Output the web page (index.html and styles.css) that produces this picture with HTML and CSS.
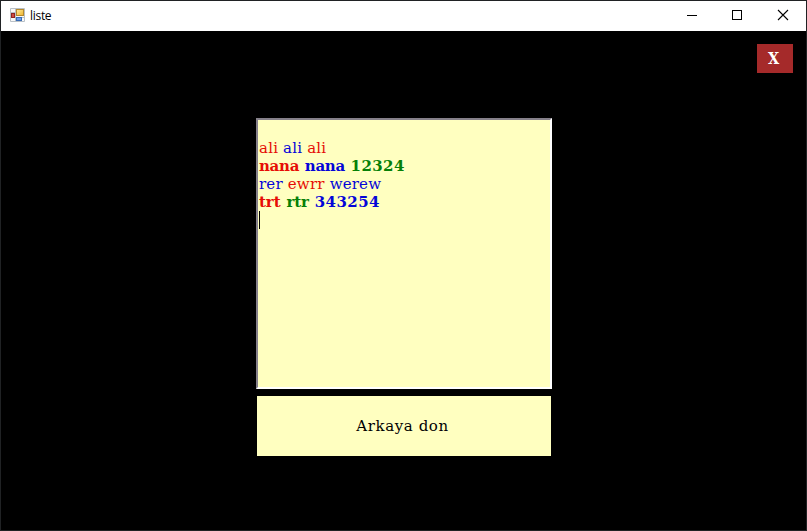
FILE: index.html
```html
<!DOCTYPE html>
<html lang="tr">
<head>
<meta charset="utf-8">
<title>liste</title>
<link rel="stylesheet" href="styles.css">
</head>
<body>
<div class="window">
  <header class="titlebar">
    <svg class="app-icon" width="15" height="15" viewBox="0 0 15 15">
      <defs>
        <linearGradient id="gold" x2="1" y2="1"><stop stop-color="#ffeb9b"/><stop offset="1" stop-color="#eeb32c"/></linearGradient>
      </defs>
      <path d="M.5.5h14v13H.5zM5.5.5v13M.5 4.500h5M.5 9.500h14M9.500 9.500v4" fill="#f8f8f8" stroke="#b9c0c6"/>
      <rect x="6.500" y="1.500" width="7" height="6" fill="url(#gold)" stroke="#b78a2c"/>
      <rect x="1.500" y="5.500" width="3" height="4" fill="#cf4a43" stroke="#8f2522"/>
      <rect x="6.500" y="9.500" width="5" height="3" fill="#6f9ee6" stroke="#386bb4"/>
    </svg>
    <h1 class="title">liste</h1>
    <nav class="controls">
      <svg class="control" viewBox="0 0 46 30"><path d="M19 15.500h10"/></svg>
      <svg class="control" viewBox="0 0 46 30"><path d="M18.500 10.500h9v9h-9z"/></svg>
      <svg class="control cross" viewBox="0 0 46 30"><path d="M18 10l10 10M28 10l-10 10"/></svg>
    </nav>
  </header>
  <main class="form">
    <div class="toolbar"><button class="exit">X</button></div>
    <div class="list">
      <p class="line"></p>
      <p class="line"><span class="red">ali</span> <span class="blue">ali</span> <span class="red">ali</span></p>
      <p class="line bold"><span class="red">nana</span> <span class="blue">nana</span> <span class="green num">12324</span></p>
      <p class="line"><span class="blue">rer</span> <span class="red">ewrr</span> <span class="blue">werew</span></p>
      <p class="line bold spaced"><span class="red">trt</span> <span class="green">rtr</span> <span class="blue num">343254</span></p>
      <p class="line"><span class="caret"></span></p>
    </div>
    <button class="back">Arkaya don</button>
  </main>
</div>
</body>
</html>
```
FILE: styles.css
```css
* { box-sizing: border-box; }
body { margin: 0; background: #191919; }
.window {
  width: 807px; height: 531px;
  border: 1px solid #202224;
  display: flex; flex-direction: column;
  background: #000;
}
.titlebar {
  height: 30px; flex: none;
  display: flex; align-items: center;
  padding-left: 9px;
  background: #fff;
}
.app-icon { margin-top: -1px; }
.title {
  margin: 0 0 0 5px;
  font: 12px/30px "Open Sans", "Noto Sans", sans-serif;
  letter-spacing: -0.3px;
  color: #000;
}
.controls { display: flex; margin-left: auto; margin-top: -2px; }
.control { width: 46px; height: 30px; fill: none; stroke: #000; shape-rendering: crispEdges; }
.cross { shape-rendering: auto; stroke-width: 1.1; }
.form { flex: 1; display: flex; flex-direction: column; }
.toolbar { height: 87px; display: flex; justify-content: flex-end; padding: 13px 13px 0 0; }
button { border: 0; padding: 0; font-family: "DejaVu Serif", serif; }
.exit {
  width: 36px; height: 29px; padding-right: 3px;
  background: #a52a2a; color: #fff;
  font-family: "DejaVu Serif Condensed", "DejaVu Serif", serif;
  font-size: 16px; font-weight: bold; line-height: 29px;
}
.list {
  width: 296px; height: 271px;
  margin-left: 255px; padding: 1px;
  background: #ffffc0;
  border: 2px solid;
  border-color: #85808a #fff #fff #85808a;
}
.line {
  margin: 0; height: 18px;
  font: 15px/18px "DejaVu Serif", serif;
  letter-spacing: 0.2px;
  white-space: nowrap;
}
.bold { font-weight: bold; letter-spacing: -0.3px; word-spacing: 0.8px; }
.spaced { letter-spacing: -0.1px; }
.num { letter-spacing: 0.4px; }
.red { color: #e60d05; }
.blue { color: #0505d8; }
.green { color: #068006; }
.caret { display: block; width: 1px; height: 18px; background: #000; }
.back {
  width: 294px; height: 60px; margin: 7px 0 0 256px;
  padding-right: 3px;
  background: #ffffc0; color: #000;
  font-size: 15px; line-height: 60px; letter-spacing: 0.6px;
}
```
